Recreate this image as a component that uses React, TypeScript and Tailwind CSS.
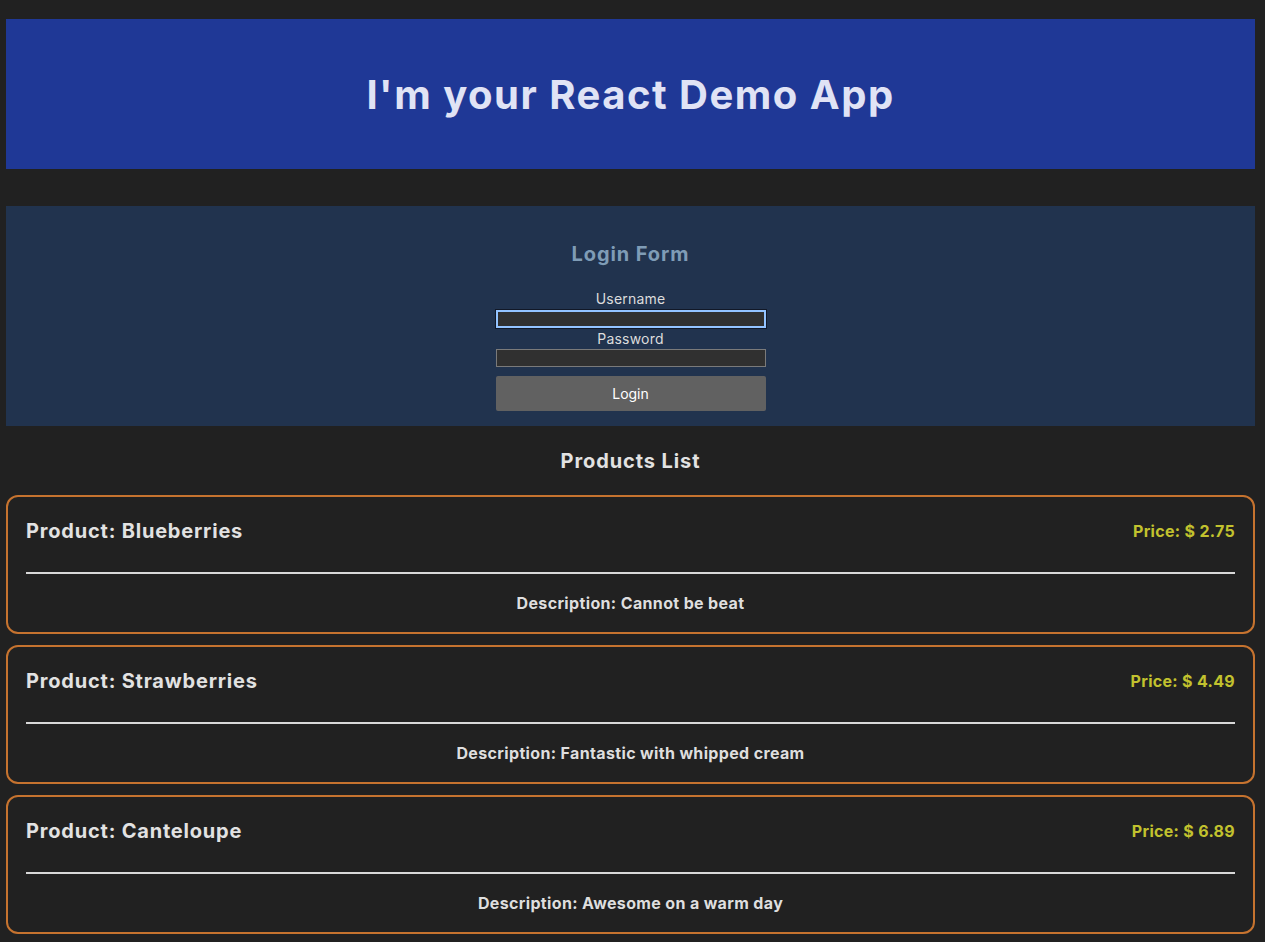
import React, { useState } from "react";

type Product = {
  name: string;
  price: string;
  description: string;
};

const products: Product[] = [
  { name: "Blueberries", price: "2.75", description: "Cannot be beat" },
  { name: "Strawberries", price: "4.49", description: "Fantastic with whipped cream" },
  { name: "Canteloupe", price: "6.89", description: "Awesome on a warm day" },
];

const ProductCard = ({ product }: { product: Product }) => {
  return (
    <div className="border-2 border-[#c6732f] rounded-[12px] px-[18px] pt-[20px] pb-[17px]">
      <div className="flex justify-between items-center h-[28px]">
        <h3 className="text-[20px] font-bold text-[#e2e2e2] tracking-[0.8px]">Product: {product.name}</h3>
        <span className="text-[16px] font-bold text-[#c2c22e] tracking-[0.3px]">Price: $ {product.price}</span>
      </div>
      <div className="mt-[27px] h-[2px] bg-[#d8d8d8]" />
      <p className="mt-[17px] h-[24px] leading-[24px] text-center text-[16px] font-bold text-[#dedede] tracking-[0.35px]">
        Description: {product.description}
      </p>
    </div>
  );
};

const App = () => {
  const [username, setUsername] = useState<string>("");
  const [password, setPassword] = useState<string>("");

  return (
    <div
      className="min-h-[942px] bg-[#212121] pl-[6px] pr-[10px] pt-[19px] pb-[8px] text-[#e2e2e2]"
      style={{ fontFamily: "Inter, 'Noto Sans', sans-serif" }}
    >
      <header className="h-[150px] bg-[#1f3896] flex items-center justify-center">
        <h1 className="mt-[2px] text-[40px] font-bold text-[#e0e3f5] leading-none tracking-[1.5px]">
          I'm your React Demo App
        </h1>
      </header>

      <section className="mt-[37px] bg-[#21334e] pt-[36px] pb-[15px] flex flex-col items-center">
        <h2 className="text-[20px] leading-[24px] font-bold text-[#7f9cb6] tracking-[0.9px]">Login Form</h2>
        <label className="mt-[23px] text-[14px] leading-[20px] text-[#dcdcdc] tracking-[0.2px]">Username</label>
        <input
          value={username}
          onChange={(e) => setUsername(e.target.value)}
          className="mt-[1px] w-[270px] h-[18px] bg-[#303030] border-2 border-[#93c3ff] outline outline-1 outline-[#111827]"
        />
        <label className="text-[14px] leading-[20px] text-[#dcdcdc] mt-[1px] tracking-[0.2px]">Password</label>
        <input
          type="password"
          value={password}
          onChange={(e) => setPassword(e.target.value)}
          className="w-[270px] h-[18px] bg-[#303030] border border-[#7a7a7a]"
        />
        <button className="mt-[9px] w-[270px] h-[35px] bg-[#616161] text-white text-[14px] rounded-[2px]">
          Login
        </button>
      </section>

      <h2 className="mt-[21px] text-center text-[20px] leading-[28px] font-bold text-[#e2e2e2] tracking-[0.9px]">
        Products List
      </h2>

      <div className="mt-[20px] flex flex-col gap-[11px]">
        {products.map((p) => (
          <ProductCard key={p.name} product={p} />
        ))}
      </div>
    </div>
  );
};

export default App;
